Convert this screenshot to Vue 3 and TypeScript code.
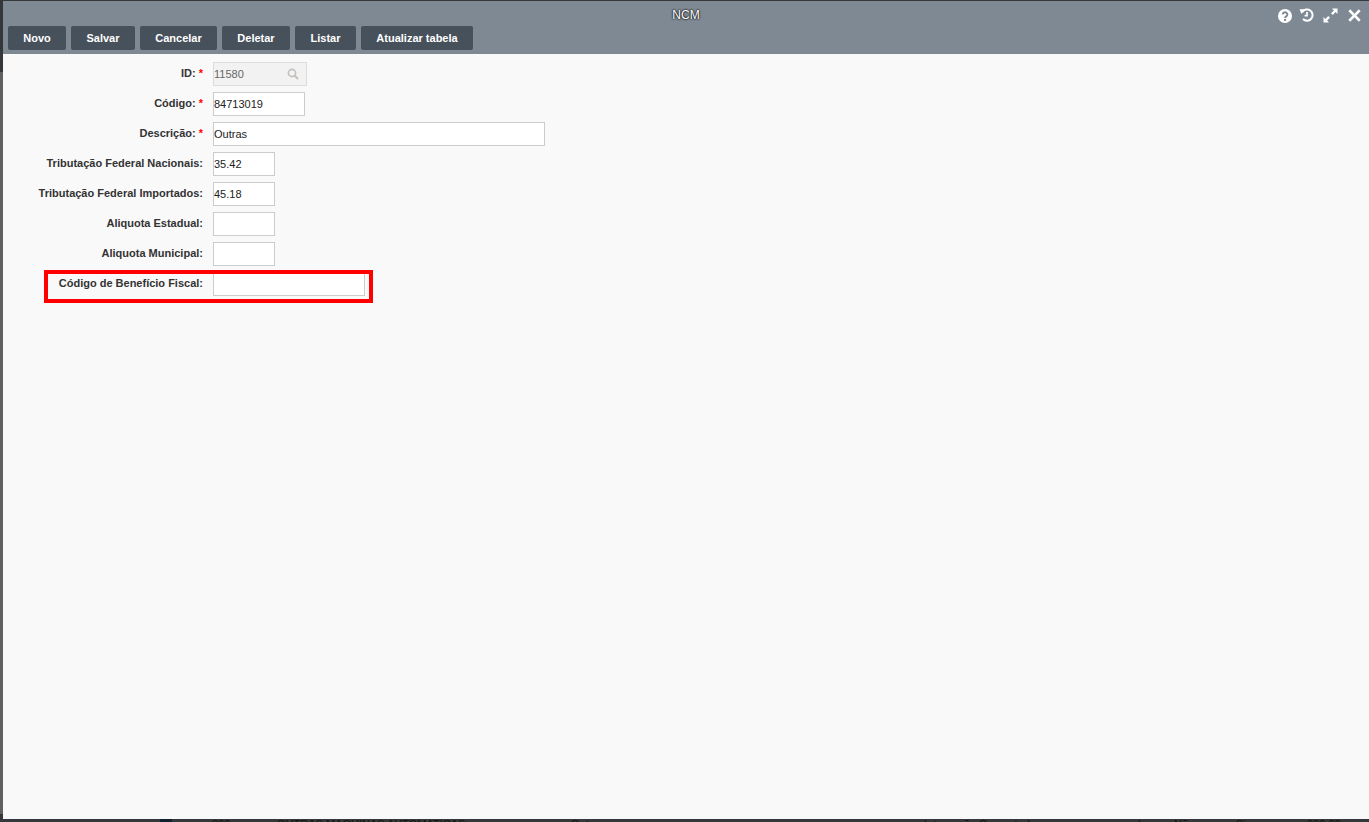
<script setup lang="ts">
interface Field {
  label: string
  value: string
  required?: boolean
  width: number
}

const buttons: { text: string; width: number }[] = [
  { text: 'Novo', width: 58 },
  { text: 'Salvar', width: 64 },
  { text: 'Cancelar', width: 77 },
  { text: 'Deletar', width: 68 },
  { text: 'Listar', width: 61 },
  { text: 'Atualizar tabela', width: 112 },
]

const fields: Field[] = [
  { label: 'Código:', value: '84713019', required: true, width: 92 },
  { label: 'Descrição:', value: 'Outras', required: true, width: 332 },
  { label: 'Tributação Federal Nacionais:', value: '35.42', width: 62 },
  { label: 'Tributação Federal Importados:', value: '45.18', width: 62 },
  { label: 'Aliquota Estadual:', value: '', width: 62 },
  { label: 'Aliquota Municipal:', value: '', width: 62 },
]

const behind: { text: string; w: number }[] = [
  { text: '000', w: 65 },
  { text: 'OUTRAS MAQUINAS AUTOMATICAS', w: 294 },
  { text: 'Outras', w: 353 },
  { text: 'Integração Computadores', w: 214 },
  { text: 'I', w: 36 },
  { text: 'Não', w: 62 },
  { text: 'Sim', w: 71 },
  { text: '000,00', w: 60 },
]
</script>

<template>
  <div class="backdrop">
    <div class="left-strip"></div>
    <div class="under">
      <span class="under-mark"></span>
      <span v-for="b in behind" :key="b.text" class="under-cell" :style="{ width: b.w + 'px' }">{{ b.text }}</span>
    </div>
    <div class="dialog">
      <header class="head">
        <div class="title">NCM</div>
        <div class="icons">
          <svg class="ic help" width="14" height="14" viewBox="0 0 14 14">
            <circle cx="7" cy="7" r="7" fill="#fff" />
            <path d="M4.600 5.400a2.400 2.200 0 1 1 3.600 2c-.8.500-1.100.8-1.100 1.500" fill="none" stroke="#7f8994" stroke-width="1.900" />
            <rect x="6" y="9.900" width="2.100" height="2" fill="#7f8994" />
          </svg>
          <svg class="ic hist" width="15" height="14" viewBox="0 0 15 14">
            <path d="M3.200 4.200A5.600 5.600 0 1 1 4 11" fill="none" stroke="#fff" stroke-width="2" />
            <path d="M0.600 1.200h5.200L2.400 6z" fill="#fff" />
            <path d="M8 4v3.600H5.600" fill="none" stroke="#fff" stroke-width="1.700" />
          </svg>
          <svg class="ic expand" width="15" height="15" viewBox="0 0 15 15">
            <path d="M9 0.500h5.500V6L12.600 4.100 9.800 7 8 5.200l2.900-2.800zM6 14.500H.5V9l1.900 1.900L5.200 8 7 9.800l-2.900 2.800z" fill="#fff" />
          </svg>
          <svg class="ic close" width="13" height="13" viewBox="0 0 14 14">
            <path d="M2.400 0.400 7 5l4.600-4.600 2 2L9 7l4.600 4.600-2 2L7 9l-4.600 4.600-2-2L5 7 .4 2.400z" fill="#fff" />
          </svg>
        </div>
        <nav class="toolbar">
          <button v-for="b in buttons" :key="b.text" class="btn" type="button" :style="{ width: b.width + 'px' }">{{ b.text }}</button>
        </nav>
      </header>
      <main class="body">
        <form class="form" @submit.prevent>
          <div class="row">
            <label class="lbl">ID: <span class="req">*</span></label>
            <div class="idbox">
              <span>11580</span>
              <svg width="12" height="12" viewBox="0 0 12 12">
                <circle cx="5" cy="5" r="3.600" fill="none" stroke="#c4c0bb" stroke-width="1.600" />
                <path d="M7.700 7.700 11 11" stroke="#c4c0bb" stroke-width="2" />
              </svg>
            </div>
          </div>
          <div v-for="f in fields" :key="f.label" class="row">
            <label class="lbl">{{ f.label }}<span v-if="f.required" class="req req-gap">*</span></label>
            <input class="inp" type="text" :value="f.value" :style="{ width: f.width + 'px' }" />
          </div>
          <div class="row highlight">
            <label class="lbl">Código de Benefício Fiscal:</label>
            <input class="inp wide" type="text" value="" />
          </div>
        </form>
      </main>
    </div>
  </div>
</template>

<style>
html, body {
  margin: 0;
  background: #34383b;
  overflow: hidden;
}
</style>

<style scoped>
.backdrop {
  position: relative;
  height: 822px;
  padding: 1px 0 3px 3px;
  box-sizing: border-box;
  font-family: "Liberation Sans", Arial, sans-serif;
  overflow: hidden;
}
.left-strip {
  position: absolute;
  left: 0;
  top: 72px;
  width: 3px;
  height: 742px;
  background: #5f6061;
}
.under {
  position: absolute;
  left: 160px;
  top: 818px;
  display: flex;
  font-size: 11px;
  line-height: 13px;
  color: #111;
  white-space: nowrap;
}
.under-mark {
  width: 12px;
  height: 13px;
  margin-right: 40px;
  background: #10202c;
}
.under-cell {
  display: block;
}
.dialog {
  position: relative;
  height: 100%;
  display: flex;
  flex-direction: column;
  background: #f9f9f9;
}
.head {
  position: relative;
  height: 53px;
  box-sizing: border-box;
  background: #7f8994;
  padding-top: 25px;
  flex: none;
}
.title {
  position: absolute;
  left: 0;
  right: 0;
  top: 6px;
  text-align: center;
  color: #fff;
  font-size: 12px;
  line-height: 16px;
  text-shadow: 0 0 2px #000, 0 0 2px #000;
}
.icons {
  position: absolute;
  right: 8px;
  top: 7px;
  display: flex;
  align-items: flex-start;
}
.ic {
  display: block;
}
.help {
  margin-top: 1px;
}
.hist {
  margin-left: 7px;
}
.expand {
  margin-left: 9px;
}
.close {
  margin-left: 10px;
  margin-top: 1px;
}
.toolbar {
  display: flex;
  gap: 5px;
  padding-left: 5px;
}
.btn {
  height: 24px;
  padding: 0;
  border: 0;
  border-radius: 2px;
  background: #47515c;
  color: #fff;
  font: bold 11px "Liberation Sans", Arial, sans-serif;
  white-space: nowrap;
}
.body {
  flex: 1;
  padding-top: 8px;
}
.form {
  display: flex;
  flex-direction: column;
  gap: 6px;
  align-items: flex-start;
}
.row {
  display: flex;
  align-items: flex-start;
  height: 24px;
  position: relative;
}
.lbl {
  width: 200px;
  padding-top: 5px;
  text-align: right;
  font-size: 11px;
  line-height: 13px;
  font-weight: bold;
  color: #333;
  margin-right: 10px;
  white-space: nowrap;
}
.req {
  color: #f00;
}
.req-gap {
  margin-left: 3px;
}
.inp {
  height: 24px;
  box-sizing: border-box;
  border: 1px solid #ccc;
  background: #fff;
  padding: 0;
  outline: 0;
  font: 11px "Liberation Sans", Arial, sans-serif;
  color: #222;
}
.idbox {
  width: 94px;
  height: 24px;
  box-sizing: border-box;
  border: 1px solid #ddd;
  background: #f2f2f2;
  color: #666;
  font-size: 11px;
  display: flex;
  align-items: center;
  justify-content: space-between;
  padding-right: 7px;
}
.highlight {
  height: 33px;
  margin: -2px 0 0 41px;
  width: 329px;
  box-sizing: border-box;
  border: 4px solid #f00;
  overflow: hidden;
}
.highlight .lbl {
  width: 155px;
  padding-top: 3px;
}
.highlight .wide {
  width: 152px;
  height: 22px;
  border-top: 0;
}
</style>
